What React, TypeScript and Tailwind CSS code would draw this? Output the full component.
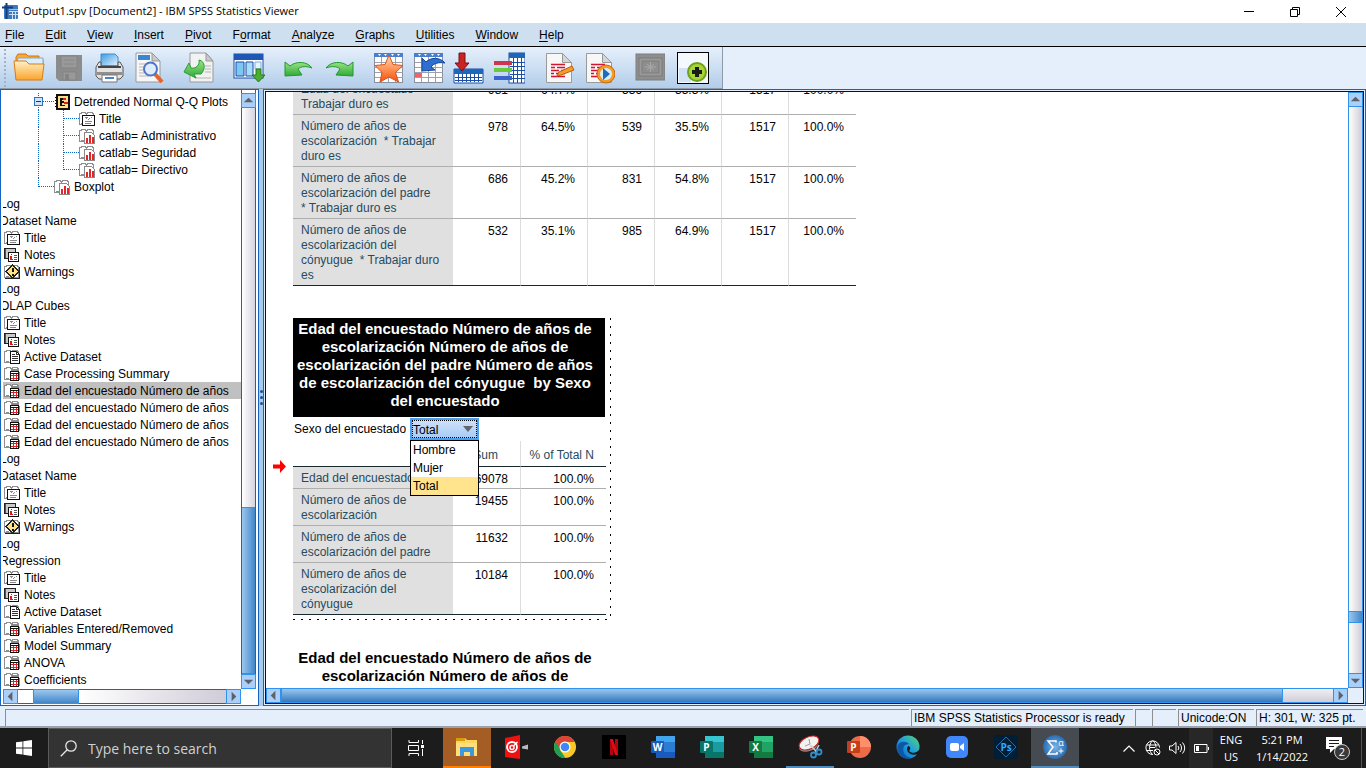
import React from "react";

/* ---------- data ---------- */

const MENUS = ["File", "Edit", "View", "Insert", "Pivot", "Format", "Analyze", "Graphs", "Utilities", "Window", "Help"];
const MNEMONIC: Record<string, number> = { Format: 1 };

type Kind = "none" | "title" | "notes" | "warn" | "doc" | "table" | "chart" | "book";
type Node = { text: string; kind: Kind; depth?: number; last?: boolean; selected?: boolean };

const EDAD = "Edad del encuestado Número de años";

const TREE: Node[] = [
  { text: "Detrended Normal Q-Q Plots", kind: "book", depth: 1 },
  { text: "Title", kind: "title", depth: 2 },
  { text: "catlab= Administrativo", kind: "chart", depth: 2 },
  { text: "catlab= Seguridad", kind: "chart", depth: 2 },
  { text: "catlab= Directivo", kind: "chart", depth: 2, last: true },
  { text: "Boxplot", kind: "chart", depth: 1, last: true },
  { text: "Log", kind: "none" },
  { text: "Dataset Name", kind: "none" },
  { text: "Title", kind: "title" },
  { text: "Notes", kind: "notes" },
  { text: "Warnings", kind: "warn" },
  { text: "Log", kind: "none" },
  { text: "OLAP Cubes", kind: "none" },
  { text: "Title", kind: "title" },
  { text: "Notes", kind: "notes" },
  { text: "Active Dataset", kind: "doc" },
  { text: "Case Processing Summary", kind: "table" },
  { text: EDAD, kind: "table", selected: true },
  { text: EDAD, kind: "table" },
  { text: EDAD, kind: "table" },
  { text: EDAD, kind: "table" },
  { text: "Log", kind: "none" },
  { text: "Dataset Name", kind: "none" },
  { text: "Title", kind: "title" },
  { text: "Notes", kind: "notes" },
  { text: "Warnings", kind: "warn" },
  { text: "Log", kind: "none" },
  { text: "Regression", kind: "none" },
  { text: "Title", kind: "title" },
  { text: "Notes", kind: "notes" },
  { text: "Active Dataset", kind: "doc" },
  { text: "Variables Entered/Removed", kind: "table" },
  { text: "Model Summary", kind: "table" },
  { text: "ANOVA", kind: "table" },
  { text: "Coefficients", kind: "table" },
];

const SUMMARY: { label: string[]; values: string[] }[] = [
  { label: ["Edad del encuestado *", "Trabajar duro es"], values: ["981", "64.7%", "536", "35.3%", "1517", "100.0%"] },
  { label: ["Número de años de", "escolarización  * Trabajar", "duro es"], values: ["978", "64.5%", "539", "35.5%", "1517", "100.0%"] },
  { label: ["Número de años de", "escolarización del padre", "* Trabajar duro es"], values: ["686", "45.2%", "831", "54.8%", "1517", "100.0%"] },
  { label: ["Número de años de", "escolarización del", "cónyugue  * Trabajar duro", "es"], values: ["532", "35.1%", "985", "64.9%", "1517", "100.0%"] },
];

const CUBE: { label: string[]; values: string[] }[] = [
  { label: ["Edad del encuestado"], values: ["69078", "100.0%"] },
  { label: ["Número de años de", "escolarización"], values: ["19455", "100.0%"] },
  { label: ["Número de años de", "escolarización del padre"], values: ["11632", "100.0%"] },
  { label: ["Número de años de", "escolarización del", "cónyugue"], values: ["10184", "100.0%"] },
];

const HEADING = [
  "Edad del encuestado Número de años de",
  "escolarización Número de años de",
  "escolarización del padre Número de años",
  "de escolarización del cónyugue  by Sexo",
  "del encuestado",
];

/* ---------- outline icons ---------- */

function Pages() {
  return (
    <>
      <path d="M.5 13.500v-11h1.500v-1h4.500v1h2v-1h4.500v1h1.500v11z" fill="#fff" stroke="#8e8e8e" />
      <path d="M1.500 12.500h3M7.500 3v3" fill="none" stroke="#8e8e8e" />
    </>
  );
}

function OutlineIcon({ kind }: { kind: Kind }) {
  return (
    <svg width="16" height="16" viewBox="0 0 16 16" className="shrink-0" shapeRendering="crispEdges" aria-hidden="true">
      {kind !== "book" && kind !== "notes" && <Pages />}
      {kind === "title" && (
        <>
          <rect x="3.500" y="4.500" width="12" height="10" fill="#fff" stroke="#111" />
          <path d="M6 6.500h3m1 1h1m1-1h1M7 7.500h1M9 8.500h1M6 10.500h7M6 12.500h6" stroke="#888" fill="none" />
        </>
      )}
      {kind === "chart" && (
        <>
          <path d="M5.500 4.500h7l3 3v8h-10z" fill="#fff" stroke="#8a8a8a" />
          <path d="M7 10h2v5H7zM10 7h2v8h-2zM13 9h2v6h-2z" fill="#e02828" />
        </>
      )}
      {kind === "table" && (
        <>
          <path d="M8 3h6v3h2v8H8z" fill="#8a8a8a" />
          <rect x="6.500" y="5.500" width="8" height="9" fill="#fff" stroke="#111" />
          <path d="M9.500 8v6M12.500 8v6M7 9.500h7M7 12.500h7" stroke="#e02020" fill="none" />
          <path d="M7 7h7" stroke="#111" />
        </>
      )}
      {kind === "doc" && (
        <>
          <path d="M6.500 2.500h6l3 3v9h-9z" fill="#fff" stroke="#111" />
          <path d="M12.500 2v3.500h3M8 5.500h3M8 7.500h6M8 9.500h6M8 11.500h6" stroke="#333" fill="none" />
        </>
      )}
      {kind === "warn" && (
        <>
          <path d="M1 14.500h14M15.500 3v12" stroke="#222" fill="none" />
          <path d="M8.500 1l6.500 6.500-6.500 6.500L2 7.500z" fill="#ffe28a" stroke="#222" />
          <path d="M7.500 4h2v4h-2zM7.500 10h2v2h-2z" fill="#111" />
        </>
      )}
      {kind === "notes" && (
        <>
          <path d="M.5 1.500h11v10h-11z" fill="#c9c9c9" stroke="#222" />
          <path d="M1.500 2v9" stroke="#e01818" fill="none" />
          <rect x="4.500" y="5.500" width="10" height="9" fill="#fff" stroke="#111" />
          <path d="M7 7h1v1H7zM6 9h2v3H6zM6 12h3v1H6z" fill="#e01818" />
          <path d="M10 8.500h3M10 10.500h3M10 12.500h3" stroke="#555" />
        </>
      )}
      {kind === "book" && (
        <>
          <rect x="3" y="1" width="12" height="14" fill="#ffe08a" stroke="#111" strokeWidth="2" />
          <path d="M1 3.500h3M1 6.500h3M1 9.500h3M1 12.500h3" stroke="#111" />
          <path d="M6 4h4v2H8v1h2v2H8v2h3v1H6z" fill="#111" />
          <path d="M9 4h3v2H9zM10 8h4v2h-4z" fill="#e02020" />
        </>
      )}
    </svg>
  );
}

function TreeLines({ node, first }: { node: Node; first: boolean }) {
  const w = node.depth === 2 ? 76 : 51;
  const dash = { stroke: "#0a64c8", strokeDasharray: "1 1", fill: "none" };
  const outerEnds = node.depth === 1 && node.last;
  return (
    <svg width={w} height="17" viewBox={`0 0 ${w} 17`} className="shrink-0" shapeRendering="crispEdges" aria-hidden="true">
      {(node.depth === 1 || !node.last || true) && <path d={outerEnds ? "M35.500 0v9" : "M35.500 0v17"} {...dash} />}
      {node.depth === 1 ? (
        <path d="M36 8.500h15" {...dash} />
      ) : (
        <path d={node.last ? "M60.500 0v9M61 8.500h15" : "M60.500 0v17M61 8.500h15"} {...dash} />
      )}
      {first && (
        <>
          <rect x="31.500" y="4.500" width="8" height="8" fill="#cfe4fb" stroke="#2f6fc0" />
          <path d="M33 8.500h5" stroke="#123a80" />
        </>
      )}
    </svg>
  );
}

/* ---------- toolbar icons ---------- */

const TOOLBAR: { name: string; art: React.ReactNode }[][] = [
  [
    {
      name: "Open",
      art: (
        <>
          <path d="M3 27V5l2-3h8l2 2h11v4h4v4" fill="#f9a93a" stroke="#d9730b" />
          <path d="M3 14l2-8h25v7z" fill="#dcecf9" stroke="#8ab" />
          <path d="M1 9h12l3 3h15l-2 16H3z" fill="url(#gOrange)" stroke="#e07b0c" />
        </>
      ),
    },
    {
      name: "Save",
      art: (
        <>
          <path d="M3 3h26v26H6l-3-3z" fill="#8c8c8c" />
          <path d="M8 4h16v12H8zM10 20h13v8H10z" fill="#999" stroke="#838383" />
          <path d="M12 22h4v6h-4z" fill="#848484" />
          <path d="M11 8h10M11 12h10" stroke="#888" />
        </>
      ),
    },
    {
      name: "Print",
      art: (
        <>
          <path d="M8 14V2h14l3 3v9z" fill="url(#gSky)" stroke="#3b8fd0" />
          <path d="M3 15l3-5h2v4h17v-4h2l3 5v9l-3 3H6l-3-3z" fill="#e2e2e2" stroke="#555" />
          <path d="M5 14h23v2H5z" fill="#444" />
          <path d="M4 20h25v3H4z" fill="#8f8f8f" />
          <path d="M9 23h15v7H9z" fill="#fff" stroke="#777" />
          <path d="M12 26h9" stroke="#4a83c3" strokeWidth="2" />
        </>
      ),
    },
    {
      name: "Print Preview",
      art: (
        <>
          <path d="M3 1h16l8 8v21H3z" fill="#f6f6f6" stroke="#999" />
          <path d="M19 1v8h8z" fill="#c9c9c9" stroke="#999" />
          <path d="M5 3h12v5H5z" fill="#3a86d4" />
          <path d="M6 12h10M6 15h5M6 18h4M6 21h5M6 24h10" stroke="#b5b5b5" />
          <path d="M22 22l7 8" stroke="#e8622b" strokeWidth="4" />
          <circle cx="17.500" cy="17" r="6.500" fill="#d9ebff" fillOpacity=".85" stroke="#4d74c6" strokeWidth="2" />
        </>
      ),
    },
  ],
  [
    {
      name: "Recall",
      art: (
        <>
          <path d="M7 1h16l7 8v21H7z" fill="#f2f2f2" stroke="#999" />
          <path d="M23 1v8h7z" fill="#c9c9c9" stroke="#999" />
          <path d="M22 14h6M22 17h6M22 20h6M12 26h16" stroke="#b5b5b5" />
          <path d="M16 8c6 1 7 9 2 14h-7l2 4L1 20l5-9 2 5c5 1 9-3 8-8z" fill="url(#gGreen)" stroke="#269b39" />
        </>
      ),
    },
  ],
  [
    {
      name: "Dialog Recall",
      art: (
        <>
          <rect x="1" y="2" width="29" height="24" fill="#fff" stroke="#1b4fa6" />
          <rect x="1" y="2" width="29" height="6" fill="#1e57b4" />
          <path d="M3 10h8v14H3z" fill="#7cc7f4" stroke="#1b4fa6" />
          <path d="M13 10h7v14h-7z" fill="#a9dbfa" stroke="#1b4fa6" />
          <path d="M22 10h6v7h-6z" fill="#e6f4fd" stroke="#7ea9d9" />
          <path d="M23 17h5v6h4l-6.500 7L19 23h4z" fill="#4bae32" stroke="#1f7d14" />
        </>
      ),
    },
  ],
  [
    {
      name: "Undo",
      art: <path d="M2 10l5 4c6-5 17-5 22 2-5-2-11-2-14 1l4 6-17 1z" fill="url(#gGreen)" stroke="#1f9a2c" />,
    },
    {
      name: "Redo",
      art: <path d="M30 10l-5 4C19 9 8 9 3 16c5-2 11-2 14 1l-4 6 17 1z" fill="url(#gGreen)" stroke="#1f9a2c" />,
    },
  ],
  [
    {
      name: "Go to Data",
      art: (
        <>
          <Grid />
          <path d="M16 3l4 9.500 10 1-7.500 7 3 9.500-9.500-5-9 5 2-9.500-7-7 10-1z" fill="url(#gStar)" stroke="#d9541a" />
        </>
      ),
    },
    {
      name: "Go to Case",
      art: (
        <>
          <Grid />
          <path d="M2 21h7v4H2z" fill="#f2606c" />
          <path d="M9 6v13l13-1-4-3c3-4 8-5 14-4-5-6-14-6-19-1z" fill="#2f6fd0" stroke="#16479b" />
        </>
      ),
    },
    {
      name: "Select Last Output",
      art: (
        <>
          <path d="M1 17h29v14H1z" fill="#fff" stroke="#1b4fa6" />
          <path d="M1 17h29v5H1z" fill="#1e66b8" />
          <path d="M5.500 22v8M9.500 22v8M13.500 22v8M17.500 22v8M21.500 22v8M25.500 22v8M2 25.500h27M2 28.500h27" stroke="#1b4fa6" />
          <path d="M6 1h6v10h4l-7 8-7-8h4z" fill="#c92323" stroke="#7d0f0f" />
        </>
      ),
    },
    {
      name: "Variables",
      art: (
        <>
          <rect x="16" y="1" width="16" height="30" fill="#fff" stroke="#1b4fa6" />
          <path d="M16 1h16v5H16z" fill="#1e66b8" />
          <path d="M20.500 6v25M24.500 6v25M28.500 6v25M17 10.500h15M17 14.500h15M17 18.500h15M17 22.500h15M17 26.500h15" stroke="#1b4fa6" />
          <path d="M1 9h18v4H1z" fill="#d0344e" />
          <path d="M1 16h18v4H1z" fill="#6cc83a" />
          <path d="M1 24h18v4H1z" fill="#3a63cf" />
        </>
      ),
    },
  ],
  [
    {
      name: "Edit Output",
      art: (
        <>
          <Sheet />
          <path d="M16 20l13-6 2 4-13 5-4 1z" fill="#f79a2c" stroke="#b8620c" />
        </>
      ),
    },
    {
      name: "Run Script",
      art: (
        <>
          <Sheet />
          <circle cx="23" cy="22" r="9" fill="#f59a23" stroke="#c26a0a" />
          <circle cx="23" cy="22" r="6" fill="#d9ecfb" />
          <path d="M20 16l7 6-7 6z" fill="#1c6db8" />
        </>
      ),
    },
  ],
  [
    {
      name: "Designate Window",
      art: (
        <>
          <rect x="3" y="2" width="29" height="26" fill="#8e8e8e" stroke="#7d7d7d" />
          <rect x="6" y="6" width="23" height="18" fill="#9a9a9a" stroke="#7a7a7a" />
          <rect x="9" y="9" width="17" height="12" fill="#8e8e8e" stroke="#7f7f7f" />
          <path d="M17.500 10v10M12 15h11M14 12l7 6M21 12l-7 6" stroke="#a8a8a8" />
        </>
      ),
    },
    {
      name: "New Item",
      art: (
        <>
          <rect x=".5" y=".5" width="31" height="31" fill="#f4f9fe" stroke="#000" />
          <path d="M2 16h12v14H2z" fill="#cfe2f6" />
          <circle cx="20" cy="20" r="9" fill="#a9d435" stroke="#6f9f18" strokeWidth="2" />
          <path d="M18 15h4v3h3v4h-3v3h-4v-3h-3v-4h3z" fill="#1b1b1b" />
        </>
      ),
    },
  ],
];

function Grid() {
  return (
    <>
      <rect x="1.500" y="1.500" width="28" height="29" fill="#fff" stroke="#8a8f9c" />
      <path d="M1 1h29v4H1z" fill="#4a7fd0" />
      <path d="M5 2h3l-1.500 2zM11 2h3l-1.500 2zM18 2h3l-1.500 2zM24 2h3l-1.500 2z" fill="#fff" />
      <path d="M8.500 5v25M15.500 5v25M22.500 5v25M2 10.500h28M2 15.500h28M2 20.500h28M2 25.500h28" stroke="#9aa0ad" />
    </>
  );
}

function Sheet() {
  return (
    <>
      <path d="M3.500 1.500h16l9 9v20h-25z" fill="#f7f7f7" stroke="#9a9a9a" />
      <path d="M19.500 1.500v9h9z" fill="#d5d5d5" stroke="#9a9a9a" />
      <path d="M8 12.500h14M8 15.500h4m2 0h8M8 18.500h8m2 0h4M8 21.500h3m2 0h9M8 24.500h14" stroke="#d01630" strokeWidth="1.500" />
    </>
  );
}

function Gradients() {
  return (
    <svg width="0" height="0" className="absolute" aria-hidden="true">
      <defs>
        <linearGradient id="gOrange" x1="0" y1="0" x2="0" y2="1"><stop offset="0" stopColor="#fff0c8" /><stop offset="1" stopColor="#fba42c" /></linearGradient>
        <linearGradient id="gSky" x1="0" y1="0" x2="1" y2="1"><stop offset="0" stopColor="#3f9be0" /><stop offset="1" stopColor="#e4f4ff" /></linearGradient>
        <linearGradient id="gGreen" x1="0" y1="0" x2="0" y2="1"><stop offset="0" stopColor="#9be384" /><stop offset="1" stopColor="#2eaa35" /></linearGradient>
        <linearGradient id="gStar" x1="0" y1="0" x2="0" y2="1"><stop offset="0" stopColor="#ffd9bd" /><stop offset=".5" stopColor="#ff9558" /><stop offset="1" stopColor="#f2500e" /></linearGradient>
        <radialGradient id="gSigma"><stop offset="0" stopColor="#7db6e6" /><stop offset="1" stopColor="#2a6bb0" /></radialGradient>
        <linearGradient id="gEdge" x1="0" y1="1" x2="1" y2="0"><stop offset="0" stopColor="#0c5fb8" /><stop offset=".5" stopColor="#1b9de2" /><stop offset="1" stopColor="#5fd668" /></linearGradient>
      </defs>
    </svg>
  );
}

/* ---------- scroll bars ---------- */

function Arrow({ dir, label }: { dir: "up" | "down" | "left" | "right"; label: string }) {
  const d = { up: "M2 9h10L7 4z", down: "M2 5h10L7 10z", left: "M9 2v10L4 7z", right: "M5 2v10l5-5z" }[dir];
  return (
    <button type="button" aria-label={label} className="flex size-[15px] shrink-0 items-center justify-center border border-[#2f93ee] bg-[#a9cffa]">
      <svg width="13" height="13" viewBox="0 0 14 14" aria-hidden="true"><path d={d} fill="#5f6166" /></svg>
    </button>
  );
}

/* ---------- report tables ---------- */

function Lines({ lines }: { lines: string[] }) {
  return (
    <>
      {lines.map((l, i) => (
        <React.Fragment key={i}>
          {i > 0 && <br />}
          {l}
        </React.Fragment>
      ))}
    </>
  );
}

function Rows({ rows }: { rows: { label: string[]; values: string[] }[] }) {
  return (
    <tbody>
      {rows.map((r, i) => {
        const line = i === rows.length - 1 ? "border-b border-b-[#15292f]" : "border-b border-b-[#aeaeae]";
        return (
          <tr key={i}>
            <th scope="row" className={`bg-[#e0e0e0] pt-[4px] pb-[2px] pl-[8px] text-left font-normal whitespace-pre text-[#264a60] ${line}`}>
              <Lines lines={r.label} />
            </th>
            {r.values.map((v, j) => (
              <td key={j} className={`pt-[5px] pr-[12px] text-right align-top text-[#010205] ${j > 0 ? "border-l border-l-[#dcdcdc]" : ""} ${line}`}>
                {v}
              </td>
            ))}
          </tr>
        );
      })}
    </tbody>
  );
}

/* ---------- task bar ---------- */

function OfficeIcon({ letter, dark, mid, light, round }: { letter: string; dark: string; mid: string; light: string; round?: boolean }) {
  return (
    <svg width="26" height="24" viewBox="0 0 26 24" aria-hidden="true">
      {round ? (
        <>
          <circle cx="14" cy="12" r="11" fill={mid} />
          <path d="M14 1a11 11 0 0 1 11 11H14z" fill={light} />
        </>
      ) : (
        <>
          <rect x="6" y="1" width="19" height="22" rx="1" fill={mid} />
          <path d="M6 1h19v6H6z" fill={light} />
          <path d="M6 17h19v6H6z" fill={dark} />
        </>
      )}
      <rect x="1" y="6" width="13" height="12" rx="1" fill={dark} />
      <text x="7.500" y="15.500" textAnchor="middle" fontSize="10" fontWeight="700" fill="#fff" fontFamily="Open Sans, sans-serif">{letter}</text>
    </svg>
  );
}

const TASKS: { name: string; cls: string; art: React.ReactNode }[] = [
  {
    name: "File Explorer",
    cls: "bg-[#a55d26] border-b-[#ff7f00]",
    art: (
      <svg width="24" height="24" viewBox="0 0 24 24" aria-hidden="true">
        <path d="M1 3h9l2 2h10v16H1z" fill="#ffd560" /><path d="M1 3h9v3H1z" fill="#d99a12" /><path d="M1 8h21v13H1z" fill="#ffdf7d" />
        <path d="M5 12h14v9h-4v-4h-6v4H5z" fill="#3d98dc" />
      </svg>
    ),
  },
  {
    name: "Recorder",
    cls: "border-b-transparent",
    art: (
      <svg width="26" height="26" viewBox="0 0 26 26" aria-hidden="true">
        <path d="M2 4l15-3v24L2 23z" fill="#f01010" /><path d="M19 12.500l6-2v5l-6-1z" fill="#bbb" />
        <circle cx="9" cy="13" r="5" fill="none" stroke="#fff" strokeWidth="1.800" /><circle cx="9" cy="13.500" r="2" fill="none" stroke="#fff" strokeWidth="1.500" /><path d="M10.500 12l4-4" stroke="#fff" strokeWidth="1.500" />
      </svg>
    ),
  },
  {
    name: "Chrome",
    cls: "border-b-transparent",
    art: (
      <svg width="24" height="24" viewBox="0 0 24 24" aria-hidden="true">
        <circle cx="12" cy="12" r="11" fill="#fbc926" />
        <path d="M2.500 6.500A11 11 0 0 1 21.500 6.500H12z" fill="#dc4437" /><path d="M2.500 6.500L12 6.500 7 15l5.500 8A11 11 0 0 1 2.500 6.500z" fill="#1ea053" />
        <path d="M2.500 6.500L7.500 15 12 7h9.500A11 11 0 0 0 2.500 6.500z" fill="#dc4437" />
        <circle cx="12" cy="12" r="5.500" fill="#fff" /><circle cx="12" cy="12" r="4.300" fill="#4285f4" />
      </svg>
    ),
  },
  {
    name: "Netflix",
    cls: "border-b-transparent",
    art: (
      <svg width="24" height="24" viewBox="0 0 24 24" aria-hidden="true">
        <path d="M0 0h24v24H0z" fill="#000" /><path d="M8 4h3v16H8zM13 4h3v16h-3z" fill="#b1060f" /><path d="M8 4h3l5 16h-3z" fill="#e50914" />
      </svg>
    ),
  },
  { name: "Word", cls: "border-b-transparent", art: <OfficeIcon letter="W" dark="#185abd" mid="#2b7cd3" light="#41a5ee" /> },
  { name: "Publisher", cls: "border-b-transparent", art: <OfficeIcon letter="P" dark="#077568" mid="#1a9ba1" light="#37c6d0" /> },
  { name: "Excel", cls: "border-b-transparent", art: <OfficeIcon letter="X" dark="#107c41" mid="#21a366" light="#33c481" /> },
  {
    name: "Snipping Tool",
    cls: "border-b-[#4f8cc0]",
    art: (
      <svg width="26" height="26" viewBox="0 0 26 26" aria-hidden="true">
        <path d="M2 14c1 5 10 5 17 0l3-6" fill="#8a8a8a" />
        <ellipse cx="12" cy="9" rx="10.500" ry="6" transform="rotate(-24 12 9)" fill="#f2f2f2" stroke="#c22" />
        <path d="M12 5l1 5-5 2" fill="none" stroke="#a99" />
        <path d="M13 11l7 7M22 11l-4 8" stroke="#ccc" strokeWidth="1.500" />
        <circle cx="16.500" cy="21" r="2.500" fill="none" stroke="#2e8fd0" strokeWidth="1.800" /><circle cx="22" cy="18" r="2.500" fill="none" stroke="#2e8fd0" strokeWidth="1.800" />
      </svg>
    ),
  },
  { name: "PowerPoint", cls: "border-b-transparent", art: <OfficeIcon letter="P" dark="#c43e1c" mid="#ed6c47" light="#ff8f6b" round /> },
  {
    name: "Edge",
    cls: "border-b-transparent",
    art: (
      <svg width="24" height="24" viewBox="0 0 24 24" aria-hidden="true">
        <circle cx="12" cy="12" r="11.500" fill="url(#gEdge)" />
        <path d="M9 10c-4 4-1 12 6 13-8 3-16-6-13-13 2-4 8-4 11-1z" fill="#0d57a7" />
        <path d="M13 11c2 2 1 4 0 5 3 3 8 2 11-2l-1 5c-5 2-12 0-12-5 0-2 1-3 2-3z" fill="#1c1c1c" />
      </svg>
    ),
  },
  {
    name: "Zoom",
    cls: "border-b-transparent",
    art: (
      <svg width="24" height="24" viewBox="0 0 24 24" aria-hidden="true">
        <rect x="1" y="1" width="22" height="22" rx="5" fill="#4087fc" /><rect x="5" y="8" width="9" height="8" rx="2" fill="#fff" /><path d="M15 11l4-3v8l-4-3z" fill="#fff" />
      </svg>
    ),
  },
  {
    name: "Photoshop Express",
    cls: "border-b-transparent",
    art: (
      <svg width="24" height="24" viewBox="0 0 24 24" aria-hidden="true">
        <rect width="24" height="24" rx="3" fill="#001e36" /><path d="M12 2l10 10-10 10L2 12z" fill="none" stroke="#1d6fa8" />
        <text x="12" y="15.500" textAnchor="middle" fontSize="10" fontWeight="700" fill="#31a8ff" fontFamily="Open Sans, sans-serif">Ps</text>
      </svg>
    ),
  },
  {
    name: "SPSS Statistics",
    cls: "bg-[#454b50] border-b-[#4f8cc0]",
    art: (
      <svg width="26" height="26" viewBox="0 0 26 26" aria-hidden="true">
        <circle cx="13" cy="13" r="12" fill="url(#gSigma)" />
        <path d="M14 8.500V7H6l5 6-5 7h9v-2" fill="none" stroke="#fff" strokeWidth="1.500" />
        <text x="19" y="12" textAnchor="middle" fontSize="9" fill="#fff" fontFamily="Open Sans, sans-serif">α</text>
        <path d="M19 14.500v5M16.500 17h5" stroke="#fff" />
      </svg>
    ),
  },
];

/* ---------- app ---------- */

export default function App() {
  return (
    <div className="flex h-screen flex-col overflow-hidden bg-[#e4effb] font-['Liberation_Sans',Arial,sans-serif] text-[12px] text-black">
      <Gradients />

      <header className="flex h-[23px] shrink-0 items-center bg-white pl-[2px]">
        <svg width="17" height="17" viewBox="0 0 17 17" aria-hidden="true">
          <rect x="2" y="2" width="14" height="14" rx="1" fill="#3f79bd" />
          <path d="M7 8.500h9M7 11.500h9M10.500 8v8M13.500 8v8" stroke="#cfe2f5" />
          <path d="M4.500 0v16M0 4.500h11" stroke="#153c7c" strokeWidth="2" />
          <path d="M7 6.500h9" stroke="#9cc3ea" />
        </svg>
        <h1 className="ml-[4px] flex-1 font-['Open_Sans',sans-serif] text-[11px]">Output1.spv [Document2] - IBM SPSS Statistics Viewer</h1>
        <button type="button" aria-label="Minimize" className="flex h-full w-[46px] items-center justify-center">
          <svg width="10" height="10" viewBox="0 0 10 10"><path d="M0 4.500h10" stroke="#000" /></svg>
        </button>
        <button type="button" aria-label="Restore" className="flex h-full w-[46px] items-center justify-center">
          <svg width="10" height="10" viewBox="0 0 10 10"><path d="M.5 2.500h7v7h-7zM2.500 2.500v-2h7v7h-2" fill="none" stroke="#000" /></svg>
        </button>
        <button type="button" aria-label="Close" className="mr-[2px] flex h-full w-[46px] items-center justify-center">
          <svg width="10" height="10" viewBox="0 0 10 10"><path d="M0 0l10 10M10 0L0 10" stroke="#000" /></svg>
        </button>
      </header>

      <nav className="flex h-[24px] shrink-0 items-center gap-[21px] border-b border-black bg-[#cee0f0] pl-[5px]">
        {MENUS.map((m) => {
          const k = MNEMONIC[m] ?? 0;
          return (
            <button key={m} type="button">
              {m.slice(0, k)}
              <span className="underline underline-offset-2">{m[k]}</span>
              {m.slice(k + 1)}
            </button>
          );
        })}
      </nav>

      <div className="flex h-[42px] shrink-0">
        <div role="toolbar" aria-label="Viewer" className="flex items-center gap-[18px] border-r border-b border-[#8e9aa8] bg-linear-to-b from-[#e6f0fb] to-[#b3cdea] pr-[13px]">
          <div className="-mr-[11px] ml-[4px] h-[38px] border-l-2 border-dotted border-[#9fb3c9]" />
          {TOOLBAR.map((group, i) => (
            <div key={i} className={i === TOOLBAR.length - 1 ? "flex gap-3" : "flex gap-2"}>
              {group.map((t) => (
                <button key={t.name} type="button" aria-label={t.name} title={t.name} className="size-8">
                  <svg width="32" height="32" viewBox="0 0 32 32" aria-hidden="true">{t.art}</svg>
                </button>
              ))}
            </div>
          ))}
        </div>
      </div>

      <div className="flex min-h-0 flex-1">
        <aside className="flex w-[259px] shrink-0 flex-col border-x border-y border-[#1565c0] bg-white pr-[2px] pb-[1px] pl-[2px]">
          <div className="flex min-h-0 flex-1">
            <ul className="min-w-0 flex-1 overflow-hidden pt-[3px]">
              {TREE.map((n, i) => (
                <li key={i} className={`flex h-[17px] items-center whitespace-nowrap ${n.selected ? "bg-[#c0c0c0]" : ""} ${!n.depth && n.kind !== "none" ? "pl-px" : ""}`}>
                  {n.depth && <TreeLines node={n} first={i === 0} />}
                  {n.kind !== "none" ? <OutlineIcon kind={n.kind} /> : null}
                  <a href="#output" className={n.kind === "none" ? "-ml-[3px]" : "ml-[4px]"}>{n.text}</a>
                </li>
              ))}
            </ul>
            <div className="flex w-[15px] flex-col border-x border-[#1565c0] pt-[3px]">
              <div className="-mx-px"><Arrow dir="up" label="Scroll outline up" /></div>
              <div className="grow-[400] bg-linear-to-r from-white to-[#d6d4df]" />
              <div className="grow-[165] border-y border-[#2f93ee] bg-linear-to-r from-[#9cc6ee] to-[#3f87c9]" />
              <div className="-mx-px"><Arrow dir="down" label="Scroll outline down" /></div>
            </div>
          </div>
          <div className="mr-[15px] flex h-[15px]">
            <Arrow dir="left" label="Scroll outline left" />
            <div className="grow-[15] border-y border-[#1565c0] bg-white" />
            <div className="grow-[45] border border-[#2f93ee] bg-linear-to-b from-[#9cc6ee] to-[#3f87c9]" />
            <div className="grow-[149] border-y border-[#1565c0] bg-linear-to-r from-white to-[#d0ccd8]" />
            <Arrow dir="right" label="Scroll outline right" />
          </div>
        </aside>

        <div className="flex w-[4px] shrink-0 flex-col items-center justify-center gap-[3px] bg-[#a9cbee]">
          <span className="size-[3px] rounded-full bg-[#1a4f9c]" />
          <span className="size-[3px] rounded-full bg-[#1a4f9c]" />
          <span className="size-[3px] rounded-full bg-[#1a4f9c]" />
        </div>

        <main className="flex min-w-0 flex-1 border border-[#1565c0] p-[1px]">
          <div className="flex min-w-0 flex-1 flex-col border border-[#00009c] bg-white">
            <div className="flex min-h-0 flex-1">
              <div id="output" className="min-w-0 flex-1 overflow-hidden pl-[27px]">
                <table className="-mt-[14px] w-[563px] table-fixed border-separate border-spacing-0 leading-[15px]">
                  <colgroup>
                    <col className="w-[160px]" />
                    <col span={5} className="w-[67px]" />
                    <col />
                  </colgroup>
                  <Rows rows={SUMMARY} />
                </table>

                <section className="relative mt-[32px] w-[318px] pr-[5px] pb-[5px]">
                  <svg className="absolute inset-0 size-full" aria-hidden="true" shapeRendering="crispEdges">
                    <line x1="100%" y1="0" x2="100%" y2="100%" stroke="#000" strokeWidth="2" strokeDasharray="2 6" />
                    <line x1="0" y1="100%" x2="100%" y2="100%" stroke="#000" strokeWidth="2" strokeDasharray="2 6" />
                  </svg>
                  <svg className="absolute top-[142px] -left-[20px]" width="13" height="13" viewBox="0 0 13 13" aria-hidden="true">
                    <path d="M0 4.500h7V0l6 6.500L7 13V8.500H0z" fill="#f00" />
                  </svg>
                  <h2 className="w-[312px] bg-black pt-[2px] pr-[8px] pb-[7px] text-center text-[15px] leading-[18px] font-bold whitespace-pre text-white">
                    <Lines lines={HEADING} />
                  </h2>
                  <div className="flex h-[24px] items-center pl-px">
                    <label htmlFor="layer" className="w-[116px] whitespace-nowrap">Sexo del encuestado</label>
                    <div className="relative flex">
                      <div className="relative flex h-[22px] w-[69px] border-2 border-[#4aa0f0] bg-linear-to-b from-[#cfe1fa] to-[#a7cbf6]">
                        <select id="layer" defaultValue="Total" className="w-full appearance-none border border-dotted border-black bg-transparent outline-none">
                          <option>Hombre</option>
                          <option>Mujer</option>
                          <option>Total</option>
                        </select>
                        <svg className="pointer-events-none absolute top-[6px] right-[4px]" width="10" height="6" viewBox="0 0 10 6" aria-hidden="true">
                          <path d="M0 0h10L5 6z" fill="#63666c" />
                        </svg>
                      </div>
                      <ul role="listbox" aria-label="Sexo del encuestado" className="absolute top-full left-0 z-10 w-[69px] border border-black bg-white leading-[18px]">
                        <li role="option" aria-selected="false" className="pl-[2px]">Hombre</li>
                        <li role="option" aria-selected="false" className="pl-[2px]">Mujer</li>
                        <li role="option" aria-selected="true" className="bg-[#ffe48d] pl-[2px]">Total</li>
                      </ul>
                    </div>
                  </div>
                  <table className="w-[313px] table-fixed border-separate border-spacing-0 leading-[15px]">
                    <colgroup>
                      <col className="w-[160px]" />
                      <col className="w-[67px]" />
                      <col />
                    </colgroup>
                    <thead className="text-[#264a60]">
                      <tr>
                        <td className="border-b border-[#15292f]" />
                        <th scope="col" className="border-b border-l border-b-[#15292f] border-l-[#dcdcdc] pt-[7px] pr-[22px] pb-[3px] text-right font-normal">Sum</th>
                        <th scope="col" className="border-b border-l border-b-[#15292f] border-l-[#dcdcdc] pt-[7px] pr-[12px] pb-[3px] text-right font-normal">% of Total N</th>
                      </tr>
                    </thead>
                    <Rows rows={CUBE} />
                  </table>
                </section>

                <h2 className="mt-[29px] w-[312px] pr-[8px] text-center text-[15px] leading-[18px] font-bold whitespace-pre">
                  <Lines lines={HEADING} />
                </h2>
              </div>
              <div className="flex w-[15px] flex-col border-x border-[#2f93ee]">
                <div className="-mx-px"><Arrow dir="up" label="Scroll up" /></div>
                <div className="grow-[505] bg-linear-to-r from-white to-[#d0ccd8]" />
                <div className="grow-[10] border-y border-[#2f93ee] bg-linear-to-r from-[#9cc6ee] to-[#3f87c9]" />
                <div className="grow-[50] bg-linear-to-r from-white to-[#d0ccd8]" />
                <div className="-mx-px"><Arrow dir="down" label="Scroll down" /></div>
              </div>
            </div>
            <div className="flex h-[15px] shrink-0 bg-[#e4effb] pr-[15px]">
              <Arrow dir="left" label="Scroll left" />
              <div className="grow-[1002] border border-[#2f93ee] bg-linear-to-b from-[#9cc6ee] to-[#2f79bd]" />
              <div className="grow-[50] border-y border-[#2f93ee] bg-linear-to-b from-[#f0f0f4] to-[#d0ccd8]" />
              <Arrow dir="right" label="Scroll right" />
            </div>
          </div>
        </main>
      </div>

      <footer className="flex h-[22px] shrink-0 items-stretch gap-[2px] border-b-2 border-[#9aa3ad] bg-[#e4effb] pt-[3px] pr-[3px] pl-[5px]">
        <div className="flex-1 border-t border-l border-[#8e8e8e]" />
        <div className="w-[222px] border-t border-l border-[#8e8e8e] pl-[2px] leading-[16px]">IBM SPSS Statistics Processor is ready</div>
        <div className="w-[15px] border-t border-l border-[#8e8e8e]" />
        <div className="w-[24px] border-t border-l border-[#8e8e8e]" />
        <div className="w-[76px] border-t border-l border-[#8e8e8e] pl-[2px] leading-[16px]">Unicode:ON</div>
        <div className="w-[107px] border-t border-l border-[#8e8e8e] pl-[2px] leading-[16px]">H: 301, W: 325 pt.</div>
      </footer>

      <div className="flex h-[40px] shrink-0 items-stretch bg-[#1c1c1c] font-['Open_Sans',sans-serif] text-white">
        <button type="button" aria-label="Start" className="flex w-[48px] items-center justify-center">
          <svg width="16" height="16" viewBox="0 0 16 16"><path d="M0 2.300l6.500-.9v6.200H0zM7.300 1.300L16 0v7.600H7.300zM0 8.400h6.500v6.200L0 13.700zM7.300 8.400H16V16l-8.700-1.300z" fill="#fff" /></svg>
        </button>
        <label className="flex w-[344px] items-center gap-[11px] border border-[#5a5a5a] bg-[#333] pl-[11px]">
          <svg width="17" height="17" viewBox="0 0 17 17" aria-hidden="true"><circle cx="11" cy="6" r="5.200" fill="none" stroke="#e6e6e6" strokeWidth="1.300" /><path d="M7.200 9.800L.8 16.200" stroke="#e6e6e6" strokeWidth="1.300" /></svg>
          <input type="text" aria-label="Search" placeholder="Type here to search" className="min-w-0 flex-1 bg-transparent text-[14px] placeholder-[#d0d0d0] outline-none" />
        </label>
        <button type="button" aria-label="Task View" className="mr-[3px] flex w-[48px] items-center justify-center">
          <svg width="17" height="16" viewBox="0 0 17 16"><path d="M1 0v2.500h9.500V0M1 16v-2.500h9.500V16M.5 5.500h10v5H.5zM14.500 0v4M14.500 9v7" fill="none" stroke="#fff" /><path d="M13 5h3v3h-3z" fill="#fff" /></svg>
        </button>
        <div className="flex gap-px">
          {TASKS.map((t) => (
            <button key={t.name} type="button" aria-label={t.name} className={`flex w-[48px] items-center justify-center border-b-2 ${t.cls}`}>
              {t.art}
            </button>
          ))}
        </div>
        <div className="ml-auto flex items-stretch text-[11px] leading-[17px]">
          <button type="button" aria-label="Show hidden icons" className="flex w-[24px] items-center justify-center">
            <svg width="12" height="7" viewBox="0 0 12 7"><path d="M.5 6.500L6 1l5.500 5.500" fill="none" stroke="#fff" strokeWidth="1.200" /></svg>
          </button>
          <button type="button" aria-label="Network" className="flex w-[24px] items-center justify-center">
            <svg width="16" height="16" viewBox="0 0 16 16"><g fill="none" stroke="#fff"><path d="M8 14.500A6.800 6.800 0 1 1 14.500 7.500M1.500 5h12M1.500 10.500H8M7.500.7c-4 4-4 10 0 13.800M8 .7c2 2 3 4 3 6.800M5 7.500h5" /><circle cx="12" cy="12" r="3" /><path d="M10 10l4 4" /></g></svg>
          </button>
          <button type="button" aria-label="Volume" className="flex w-[24px] items-center justify-center">
            <svg width="17" height="14" viewBox="0 0 17 14"><path d="M.5 5h2.500l4-3.500v11L3 9H.5zM9 5a3 3 0 0 1 0 4M11 3a6 6 0 0 1 0 8M13.500 1.500a8 8 0 0 1 0 11" fill="none" stroke="#fff" /></svg>
          </button>
          <button type="button" aria-label="Battery" className="flex w-[24px] items-center justify-center bg-[#272727]">
            <svg width="15" height="9" viewBox="0 0 15 9"><path d="M.5.5h12.500v8H.5zM14.500 3v3" fill="none" stroke="#fff" /><path d="M2 2h3v5H2z" fill="#fff" /></svg>
          </button>
          <button type="button" className="w-[36px] text-center">ENG<br />US</button>
          <button type="button" className="w-[66px] text-center">5:21 PM<br />1/14/2022</button>
          <button type="button" aria-label="Notifications" className="flex w-[46px] items-center justify-center">
            <svg width="24" height="24" viewBox="0 0 24 24">
              <path d="M0 1h16v12H8l-4 4v-4H0z" fill="#fff" /><path d="M3 4.500h10M3 7.500h10M3 10.500h5" stroke="#1c1c1c" />
              <circle cx="16" cy="16" r="7.500" fill="#3a3a3a" stroke="#ccc" />
              <text x="16" y="20" textAnchor="middle" fontSize="11" fill="#fff" fontFamily="Open Sans, sans-serif">2</text>
            </svg>
          </button>
          <div className="w-[5px] border-l border-[#555]" />
        </div>
      </div>
    </div>
  );
}
